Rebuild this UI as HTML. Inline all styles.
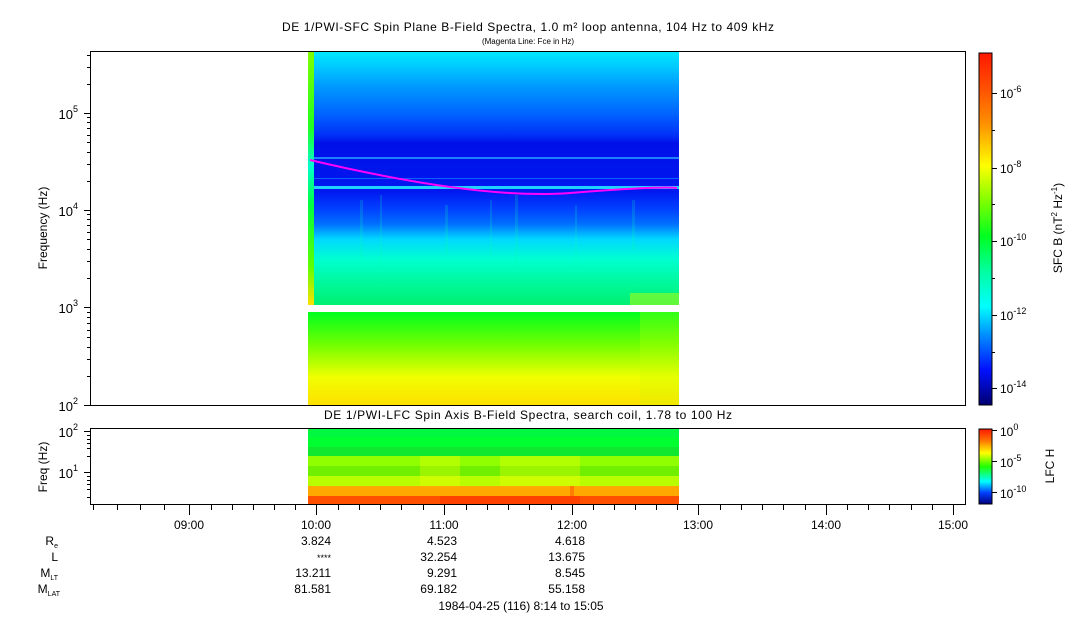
<!DOCTYPE html>
<html><head><meta charset="utf-8"><style>
html,body{margin:0;padding:0;background:#fff;}
svg{display:block;font-family:"Liberation Sans",sans-serif;}
</style></head><body>
<svg width="1083" height="620" viewBox="0 0 1083 620" xmlns="http://www.w3.org/2000/svg">
<defs>
<linearGradient id="gTop" x1="0" y1="52" x2="0" y2="305" gradientUnits="userSpaceOnUse">
<stop offset="0" stop-color="#00e8ff"/>
<stop offset="0.06" stop-color="#00c8ff"/>
<stop offset="0.14" stop-color="#0098ff"/>
<stop offset="0.25" stop-color="#0060ff"/>
<stop offset="0.33" stop-color="#0030f8"/>
<stop offset="0.36" stop-color="#0010e8"/>
<stop offset="0.55" stop-color="#0018f0"/>
<stop offset="0.62" stop-color="#0040ff"/>
<stop offset="0.68" stop-color="#0070ff"/>
<stop offset="0.74" stop-color="#00d8ff"/>
<stop offset="0.82" stop-color="#00ffd0"/>
<stop offset="0.92" stop-color="#00f898"/>
<stop offset="1" stop-color="#00f070"/>
</linearGradient>
<linearGradient id="gLow" x1="0" y1="312" x2="0" y2="405" gradientUnits="userSpaceOnUse">
<stop offset="0" stop-color="#00ff20"/>
<stop offset="0.35" stop-color="#70ff00"/>
<stop offset="0.7" stop-color="#f0ff00"/>
<stop offset="1" stop-color="#ffe000"/>
</linearGradient>
<linearGradient id="gStrip" x1="0" y1="52" x2="0" y2="305" gradientUnits="userSpaceOnUse">
<stop offset="0" stop-color="#80ff00"/>
<stop offset="0.3" stop-color="#20ff20"/>
<stop offset="0.45" stop-color="#00ffd0"/>
<stop offset="0.6" stop-color="#00ff40"/>
<stop offset="0.85" stop-color="#60ff00"/>
<stop offset="1" stop-color="#ffe000"/>
</linearGradient>
<linearGradient id="gCb" x1="0" y1="53" x2="0" y2="405" gradientUnits="userSpaceOnUse">
<stop offset="0" stop-color="#ff1800"/>
<stop offset="0.1" stop-color="#ff5000"/>
<stop offset="0.2" stop-color="#ff9000"/>
<stop offset="0.32" stop-color="#ffff00"/>
<stop offset="0.42" stop-color="#80ff00"/>
<stop offset="0.52" stop-color="#00ff20"/>
<stop offset="0.62" stop-color="#00ffa0"/>
<stop offset="0.72" stop-color="#00ffff"/>
<stop offset="0.8" stop-color="#0090ff"/>
<stop offset="0.9" stop-color="#0010ff"/>
<stop offset="1" stop-color="#000070"/>
</linearGradient>
<linearGradient id="gCb2" x1="0" y1="429" x2="0" y2="504" gradientUnits="userSpaceOnUse">
<stop offset="0" stop-color="#ff1800"/>
<stop offset="0.15" stop-color="#ff7000"/>
<stop offset="0.32" stop-color="#ffff00"/>
<stop offset="0.5" stop-color="#20ff00"/>
<stop offset="0.7" stop-color="#00ffff"/>
<stop offset="0.85" stop-color="#0040ff"/>
<stop offset="1" stop-color="#000080"/>
</linearGradient>
</defs>

<text x="528" y="31" font-size="12" text-anchor="middle" textLength="492">DE 1/PWI-SFC  Spin Plane B-Field Spectra, 1.0 m² loop antenna, 104 Hz to 409 kHz</text>
<text x="528" y="44" font-size="8" text-anchor="middle">(Magenta Line: Fce in Hz)</text>

<rect x="314" y="52" width="365" height="253" fill="url(#gTop)"/>
<rect x="308" y="52" width="6" height="253" fill="url(#gStrip)"/>
<rect x="314" y="157" width="365" height="2" fill="#2080ff"/>
<rect x="314" y="186" width="365" height="3" fill="#20d0ff"/>
<rect x="314" y="178" width="365" height="1" fill="#1060ff"/>
<g opacity="0.18" fill="#00ffb0">
<rect x="360" y="200" width="3" height="60"/><rect x="380" y="195" width="2" height="70"/><rect x="445" y="205" width="3" height="50"/><rect x="490" y="200" width="2" height="60"/><rect x="515" y="195" width="3" height="70"/><rect x="575" y="205" width="2" height="60"/><rect x="632" y="200" width="3" height="50"/>
</g>
<g fill="#c0ff00" opacity="0.5">
<rect x="630" y="293" width="49" height="12"/>
</g>
<rect x="308" y="312" width="371" height="93" fill="url(#gLow)"/>
<rect x="640" y="312" width="39" height="93" fill="#c8ff00" opacity="0.25"/>
<path d="M310,160 Q480,200 570,193 T677,188" stroke="#ff00ff" stroke-width="2" fill="none"/>

<rect x="90.5" y="51.5" width="875" height="354" fill="none" stroke="#000"/>
<g stroke="#000" stroke-width="1">
<line x1="84" y1="113.5" x2="91" y2="113.5"/><line x1="84" y1="210.5" x2="91" y2="210.5"/><line x1="84" y1="307.5" x2="91" y2="307.5"/><line x1="84" y1="405.5" x2="91" y2="405.5"/>
<line x1="87" y1="376.5" x2="91" y2="376.5"/><line x1="87" y1="359.5" x2="91" y2="359.5"/><line x1="87" y1="347.5" x2="91" y2="347.5"/><line x1="87" y1="337.5" x2="91" y2="337.5"/><line x1="87" y1="330.5" x2="91" y2="330.5"/><line x1="87" y1="323.5" x2="91" y2="323.5"/><line x1="87" y1="317.5" x2="91" y2="317.5"/><line x1="87" y1="312.5" x2="91" y2="312.5"/>
<line x1="87" y1="278.5" x2="91" y2="278.5"/><line x1="87" y1="261.5" x2="91" y2="261.5"/><line x1="87" y1="249.5" x2="91" y2="249.5"/><line x1="87" y1="239.5" x2="91" y2="239.5"/><line x1="87" y1="232.5" x2="91" y2="232.5"/><line x1="87" y1="225.5" x2="91" y2="225.5"/><line x1="87" y1="219.5" x2="91" y2="219.5"/><line x1="87" y1="214.5" x2="91" y2="214.5"/>
<line x1="87" y1="181.5" x2="91" y2="181.5"/><line x1="87" y1="164.5" x2="91" y2="164.5"/><line x1="87" y1="152.5" x2="91" y2="152.5"/><line x1="87" y1="142.5" x2="91" y2="142.5"/><line x1="87" y1="135.5" x2="91" y2="135.5"/><line x1="87" y1="128.5" x2="91" y2="128.5"/><line x1="87" y1="122.5" x2="91" y2="122.5"/><line x1="87" y1="117.5" x2="91" y2="117.5"/>
<line x1="87" y1="84.5" x2="91" y2="84.5"/><line x1="87" y1="67.5" x2="91" y2="67.5"/><line x1="87" y1="55.5" x2="91" y2="55.5"/>
</g>
<g font-size="13" text-anchor="end">
<text x="78" y="119">10<tspan font-size="9" dy="-7">5</tspan></text>
<text x="78" y="216">10<tspan font-size="9" dy="-7">4</tspan></text>
<text x="78" y="313">10<tspan font-size="9" dy="-7">3</tspan></text>
<text x="78" y="411">10<tspan font-size="9" dy="-7">2</tspan></text>
</g>
<text transform="translate(47,228) rotate(-90)" font-size="12" text-anchor="middle">Frequency (Hz)</text>

<rect x="979" y="53" width="13" height="352" fill="url(#gCb)" stroke="#000" stroke-width="1"/>
<g stroke="#000"><line x1="992" y1="93.5" x2="997" y2="93.5"/><line x1="992" y1="130.5" x2="995" y2="130.5"/><line x1="992" y1="168.5" x2="997" y2="168.5"/><line x1="992" y1="204.5" x2="995" y2="204.5"/><line x1="992" y1="241.5" x2="997" y2="241.5"/><line x1="992" y1="278.5" x2="995" y2="278.5"/><line x1="992" y1="315.5" x2="997" y2="315.5"/><line x1="992" y1="352.5" x2="995" y2="352.5"/><line x1="992" y1="388.5" x2="997" y2="388.5"/></g>
<g font-size="12">
<text x="1000" y="98">10<tspan font-size="9" dy="-6">-6</tspan></text>
<text x="1000" y="173">10<tspan font-size="9" dy="-6">-8</tspan></text>
<text x="1000" y="246">10<tspan font-size="9" dy="-6">-10</tspan></text>
<text x="1000" y="320">10<tspan font-size="9" dy="-6">-12</tspan></text>
<text x="1000" y="393">10<tspan font-size="9" dy="-6">-14</tspan></text>
</g>
<text transform="translate(1062,228) rotate(-90)" font-size="12" text-anchor="middle">SFC B (nT<tspan font-size="8" dy="-5">2</tspan><tspan dy="5"> Hz</tspan><tspan font-size="8" dy="-5">-1</tspan><tspan dy="5">)</tspan></text>

<text x="528" y="419" font-size="12" text-anchor="middle" textLength="408">DE 1/PWI-LFC  Spin Axis B-Field Spectra, search coil, 1.78 to 100 Hz</text>

<rect x="308" y="429" width="371" height="8" fill="#00f840"/>
<rect x="308" y="437" width="371" height="10" fill="#00ff30"/>
<rect x="308" y="447" width="371" height="9" fill="#10e830"/>
<rect x="308" y="456" width="371" height="10" fill="#90ff00"/>
<rect x="308" y="466" width="371" height="10" fill="#70f000"/>
<rect x="308" y="476" width="371" height="10" fill="#b8ff00"/>
<rect x="308" y="486" width="371" height="10" fill="#ffa800"/>
<rect x="308" y="496" width="371" height="8" fill="#ff5000"/>
<g opacity="0.3" fill="#ffff00"><rect x="420" y="456" width="40" height="30"/><rect x="500" y="456" width="80" height="30"/></g>
<g opacity="0.3" fill="#ff2000"><rect x="440" y="496" width="140" height="8"/><rect x="570" y="486" width="4" height="18"/></g>
<rect x="90.5" y="428.5" width="875" height="76" fill="none" stroke="#000"/>
<g stroke="#000"><line x1="84" y1="431.5" x2="91" y2="431.5"/><line x1="84" y1="472.5" x2="91" y2="472.5"/>
<line x1="87" y1="435.5" x2="91" y2="435.5"/><line x1="87" y1="439.5" x2="91" y2="439.5"/><line x1="87" y1="443.5" x2="91" y2="443.5"/><line x1="87" y1="448.5" x2="91" y2="448.5"/><line x1="87" y1="456.5" x2="91" y2="456.5"/><line x1="87" y1="476.5" x2="91" y2="476.5"/><line x1="87" y1="480.5" x2="91" y2="480.5"/><line x1="87" y1="484.5" x2="91" y2="484.5"/><line x1="87" y1="489.5" x2="91" y2="489.5"/><line x1="87" y1="497.5" x2="91" y2="497.5"/></g>
<g font-size="13" text-anchor="end"><text x="78" y="437">10<tspan font-size="9" dy="-7">2</tspan></text><text x="78" y="478">10<tspan font-size="9" dy="-7">1</tspan></text></g>
<text transform="translate(47,467) rotate(-90)" font-size="12" text-anchor="middle">Freq (Hz)</text>

<rect x="979" y="429" width="13" height="75" fill="url(#gCb2)" stroke="#000"/>
<g stroke="#000"><line x1="992" y1="430.5" x2="997" y2="430.5"/><line x1="992" y1="461.5" x2="997" y2="461.5"/><line x1="992" y1="492.5" x2="997" y2="492.5"/></g>
<g font-size="12"><text x="1000" y="436">10<tspan font-size="9" dy="-6">0</tspan></text><text x="1000" y="467">10<tspan font-size="9" dy="-6">-5</tspan></text><text x="1000" y="498">10<tspan font-size="9" dy="-6">-10</tspan></text></g>
<text transform="translate(1054,466) rotate(-90)" font-size="12" text-anchor="middle">LFC H</text>

<g stroke="#000">
<line x1="189.5" y1="505" x2="189.5" y2="515"/><line x1="316.5" y1="505" x2="316.5" y2="515"/><line x1="444.5" y1="505" x2="444.5" y2="515"/><line x1="572.5" y1="505" x2="572.5" y2="515"/><line x1="698.5" y1="505" x2="698.5" y2="515"/><line x1="826.5" y1="505" x2="826.5" y2="515"/><line x1="953.5" y1="505" x2="953.5" y2="515"/>
<line x1="93.5" y1="505" x2="93.5" y2="510"/><line x1="117.5" y1="505" x2="117.5" y2="510"/><line x1="140.5" y1="505" x2="140.5" y2="510"/><line x1="164.5" y1="505" x2="164.5" y2="510"/><line x1="211.5" y1="505" x2="211.5" y2="510"/><line x1="232.5" y1="505" x2="232.5" y2="510"/><line x1="253.5" y1="505" x2="253.5" y2="510"/><line x1="274.5" y1="505" x2="274.5" y2="510"/><line x1="295.5" y1="505" x2="295.5" y2="510"/><line x1="338.5" y1="505" x2="338.5" y2="510"/><line x1="359.5" y1="505" x2="359.5" y2="510"/><line x1="380.5" y1="505" x2="380.5" y2="510"/><line x1="401.5" y1="505" x2="401.5" y2="510"/><line x1="423.5" y1="505" x2="423.5" y2="510"/><line x1="466.5" y1="505" x2="466.5" y2="510"/><line x1="487.5" y1="505" x2="487.5" y2="510"/><line x1="508.5" y1="505" x2="508.5" y2="510"/><line x1="529.5" y1="505" x2="529.5" y2="510"/><line x1="551.5" y1="505" x2="551.5" y2="510"/><line x1="593.5" y1="505" x2="593.5" y2="510"/><line x1="614.5" y1="505" x2="614.5" y2="510"/><line x1="635.5" y1="505" x2="635.5" y2="510"/><line x1="656.5" y1="505" x2="656.5" y2="510"/><line x1="677.5" y1="505" x2="677.5" y2="510"/><line x1="720.5" y1="505" x2="720.5" y2="510"/><line x1="741.5" y1="505" x2="741.5" y2="510"/><line x1="762.5" y1="505" x2="762.5" y2="510"/><line x1="783.5" y1="505" x2="783.5" y2="510"/><line x1="805.5" y1="505" x2="805.5" y2="510"/><line x1="847.5" y1="505" x2="847.5" y2="510"/><line x1="868.5" y1="505" x2="868.5" y2="510"/><line x1="889.5" y1="505" x2="889.5" y2="510"/><line x1="911.5" y1="505" x2="911.5" y2="510"/><line x1="932.5" y1="505" x2="932.5" y2="510"/>
</g>
<g font-size="12" text-anchor="middle">
<text x="189" y="529">09:00</text><text x="316" y="529">10:00</text><text x="444" y="529">11:00</text><text x="572" y="529">12:00</text><text x="698" y="529">13:00</text><text x="826" y="529">14:00</text><text x="953" y="529">15:00</text>
</g>
<g font-size="12" text-anchor="end">
<text x="58" y="545">R<tspan font-size="7" dy="3">e</tspan></text>
<text x="58" y="561">L</text>
<text x="58" y="577">M<tspan font-size="7" dy="3">LT</tspan></text>
<text x="60" y="593">M<tspan font-size="7" dy="3">LAT</tspan></text>
<text x="331" y="545">3.824</text><text x="457" y="545">4.523</text><text x="585" y="545">4.618</text>
<text x="331" y="561" font-size="9">****</text><text x="457" y="561">32.254</text><text x="585" y="561">13.675</text>
<text x="331" y="577">13.211</text><text x="457" y="577">9.291</text><text x="585" y="577">8.545</text>
<text x="331" y="593">81.581</text><text x="457" y="593">69.182</text><text x="585" y="593">55.158</text>
</g>
<text x="521" y="610" font-size="12" text-anchor="middle">1984-04-25 (116) 8:14 to 15:05</text>
</svg>
</body></html>
